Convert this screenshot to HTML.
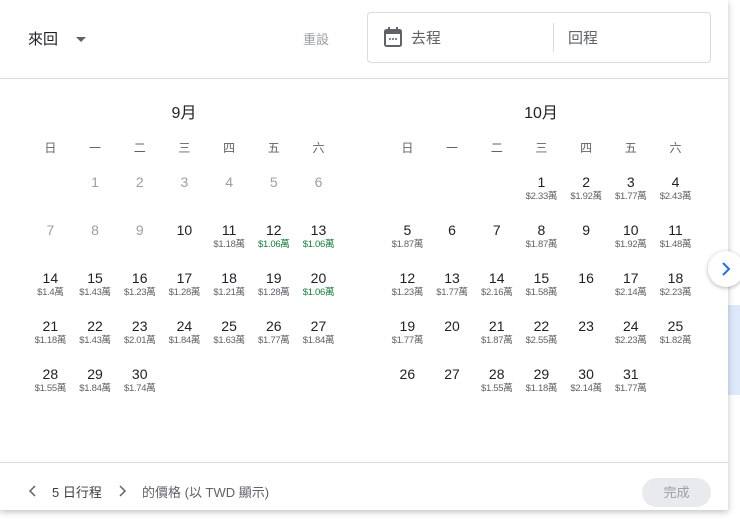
<!DOCTYPE html><html><head><meta charset="utf-8"><style>
*{margin:0;padding:0;box-sizing:border-box}
body{width:740px;height:526px;overflow:hidden;background:#fff;font-family:"Liberation Sans","Noto Sans CJK TC",sans-serif;position:relative;color:#3c4043}
.bg{position:absolute;left:0;top:510px;width:740px;height:16px;background:#fff}
.panel{position:absolute;left:0;top:0;width:728px;height:510px;background:#fff;box-shadow:0 2px 6px rgba(0,0,0,.25)}
.abs{position:absolute}
.m{position:absolute;top:173px;display:grid;grid-template-columns:repeat(7,44.7px);grid-auto-rows:48px}
.c{text-align:center}
.c b{display:block;font-weight:normal;font-size:14px;line-height:18px;color:#202124}
.c i{display:block;font-style:normal;font-size:9.5px;line-height:11px;color:#5f6368;white-space:nowrap;letter-spacing:-.3px}
.c.g b{color:#9aa0a6}
.c i.gr{color:#188038}
.wd{position:absolute;top:139px;display:grid;grid-template-columns:repeat(7,44.7px);font-size:12px;color:#5f6368;text-align:center}
.mt{position:absolute;top:99px;font-size:16px;color:#202124;width:312px;text-align:center}
</style></head><body>
<div class="bg"></div>
<div class="abs" style="left:728px;top:305px;width:12px;height:90px;background:#dde8fb"></div>
<div class="panel">
<div class="abs" style="left:28px;top:28px;font-size:15px;color:#202124">來回</div>
<div class="abs" style="left:76px;top:37px;width:0;height:0;border-left:5px solid transparent;border-right:5px solid transparent;border-top:5px solid #5f6368"></div>
<div class="abs" style="left:303px;top:29px;font-size:13px;color:#9aa0a6">重設</div>
<div class="abs" style="left:367px;top:12px;width:344px;height:51px;border:1px solid #dadce0;border-radius:4px"></div>
<svg class="abs" style="left:383px;top:26px" width="20" height="22" viewBox="0 0 20 22"><rect x="2" y="4" width="16" height="16" rx="1.5" fill="none" stroke="#5f6368" stroke-width="2"/><rect x="2" y="4" width="16" height="4" fill="#5f6368"/><rect x="5" y="1" width="2" height="4" fill="#5f6368"/><rect x="13" y="1" width="2" height="4" fill="#5f6368"/><circle cx="7" cy="13" r="1" fill="#5f6368"/><circle cx="10" cy="13" r="1" fill="#5f6368"/><circle cx="13" cy="13" r="1" fill="#5f6368"/></svg>
<div class="abs" style="left:411px;top:27px;font-size:15px;color:#5f6368">去程</div>
<div class="abs" style="left:553px;top:23px;width:1px;height:29px;background:#dadce0"></div>
<div class="abs" style="left:568px;top:27px;font-size:15px;color:#5f6368">回程</div>
<div class="abs" style="left:0;top:78px;width:728px;height:1px;background:#dadce0"></div>

<div class="mt" style="left:28px">9月</div>
<div class="mt" style="left:385px">10月</div>
<div class="wd" style="left:28px"><span>日</span><span>一</span><span>二</span><span>三</span><span>四</span><span>五</span><span>六</span></div>
<div class="wd" style="left:385px"><span>日</span><span>一</span><span>二</span><span>三</span><span>四</span><span>五</span><span>六</span></div>

<div class="m" style="left:28px">
<div></div><div class="c g"><b>1</b></div><div class="c g"><b>2</b></div><div class="c g"><b>3</b></div><div class="c g"><b>4</b></div><div class="c g"><b>5</b></div><div class="c g"><b>6</b></div>
<div class="c g"><b>7</b></div><div class="c g"><b>8</b></div><div class="c g"><b>9</b></div><div class="c"><b>10</b></div><div class="c"><b>11</b><i>$1.18萬</i></div><div class="c"><b>12</b><i class="gr">$1.06萬</i></div><div class="c"><b>13</b><i class="gr">$1.06萬</i></div>
<div class="c"><b>14</b><i>$1.4萬</i></div><div class="c"><b>15</b><i>$1.43萬</i></div><div class="c"><b>16</b><i>$1.23萬</i></div><div class="c"><b>17</b><i>$1.28萬</i></div><div class="c"><b>18</b><i>$1.21萬</i></div><div class="c"><b>19</b><i>$1.28萬</i></div><div class="c"><b>20</b><i class="gr">$1.06萬</i></div>
<div class="c"><b>21</b><i>$1.18萬</i></div><div class="c"><b>22</b><i>$1.43萬</i></div><div class="c"><b>23</b><i>$2.01萬</i></div><div class="c"><b>24</b><i>$1.84萬</i></div><div class="c"><b>25</b><i>$1.63萬</i></div><div class="c"><b>26</b><i>$1.77萬</i></div><div class="c"><b>27</b><i>$1.84萬</i></div>
<div class="c"><b>28</b><i>$1.55萬</i></div><div class="c"><b>29</b><i>$1.84萬</i></div><div class="c"><b>30</b><i>$1.74萬</i></div>
</div>

<div class="m" style="left:385px">
<div></div><div></div><div></div><div class="c"><b>1</b><i>$2.33萬</i></div><div class="c"><b>2</b><i>$1.92萬</i></div><div class="c"><b>3</b><i>$1.77萬</i></div><div class="c"><b>4</b><i>$2.43萬</i></div>
<div class="c"><b>5</b><i>$1.87萬</i></div><div class="c"><b>6</b></div><div class="c"><b>7</b></div><div class="c"><b>8</b><i>$1.87萬</i></div><div class="c"><b>9</b></div><div class="c"><b>10</b><i>$1.92萬</i></div><div class="c"><b>11</b><i>$1.48萬</i></div>
<div class="c"><b>12</b><i>$1.23萬</i></div><div class="c"><b>13</b><i>$1.77萬</i></div><div class="c"><b>14</b><i>$2.16萬</i></div><div class="c"><b>15</b><i>$1.58萬</i></div><div class="c"><b>16</b></div><div class="c"><b>17</b><i>$2.14萬</i></div><div class="c"><b>18</b><i>$2.23萬</i></div>
<div class="c"><b>19</b><i>$1.77萬</i></div><div class="c"><b>20</b></div><div class="c"><b>21</b><i>$1.87萬</i></div><div class="c"><b>22</b><i>$2.55萬</i></div><div class="c"><b>23</b></div><div class="c"><b>24</b><i>$2.23萬</i></div><div class="c"><b>25</b><i>$1.82萬</i></div>
<div class="c"><b>26</b></div><div class="c"><b>27</b></div><div class="c"><b>28</b><i>$1.55萬</i></div><div class="c"><b>29</b><i>$1.18萬</i></div><div class="c"><b>30</b><i>$2.14萬</i></div><div class="c"><b>31</b><i>$1.77萬</i></div>
</div>

<div class="abs" style="left:0;top:462px;width:728px;height:1px;background:#dadce0"></div>
<svg class="abs" style="left:28px;top:484px" width="10" height="14" viewBox="0 0 10 14"><path d="M7 2L2 7l5 5" fill="none" stroke="#5f6368" stroke-width="1.5"/></svg>
<div class="abs" style="left:52px;top:482px;font-size:13px;color:#3c4043">5 日行程</div>
<svg class="abs" style="left:117px;top:484px" width="10" height="14" viewBox="0 0 10 14"><path d="M3 2l5 5-5 5" fill="none" stroke="#5f6368" stroke-width="1.5"/></svg>
<div class="abs" style="left:142px;top:482px;font-size:13px;color:#5f6368">的價格 (以 TWD 顯示)</div>
<div class="abs" style="left:642px;top:478px;width:69px;height:29px;border-radius:15px;background:#e8eaed;color:#9aa0a6;font-size:13px;text-align:center;line-height:29px">完成</div>
</div>
<div class="abs" style="left:708px;top:251px;width:36px;height:36px;border-radius:50%;background:#fff;box-shadow:0 1px 4px rgba(0,0,0,.3)"></div>
<svg class="abs" style="left:718px;top:261px" width="16" height="16" viewBox="0 0 16 16"><path d="M5 2l6 6-6 6" fill="none" stroke="#1a73e8" stroke-width="2"/></svg>
</body></html>
